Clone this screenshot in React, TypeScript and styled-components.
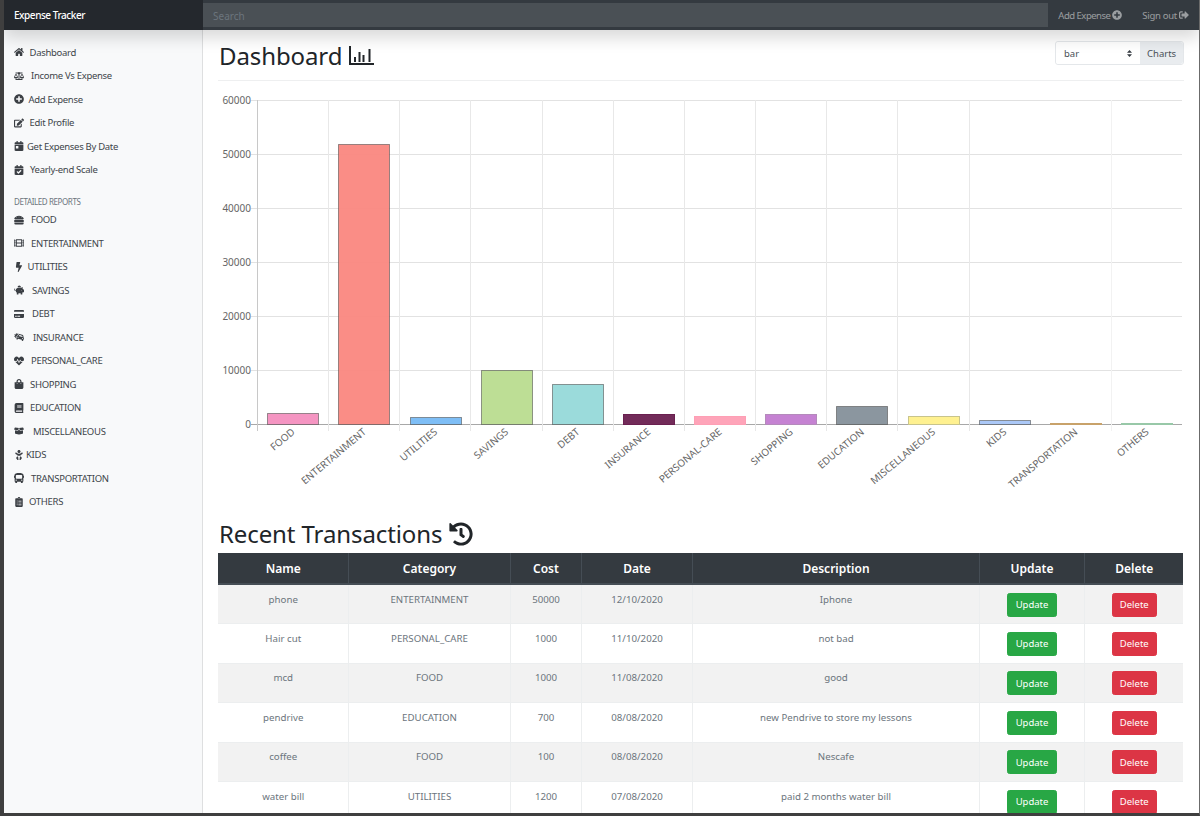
import React from 'react'
import styled, { createGlobalStyle } from 'styled-components'
import { IconType } from 'react-icons'
import {
  FaBalanceScale,
  FaBaby,
  FaBolt,
  FaBook,
  FaBoxOpen,
  FaBus,
  FaCalendarCheck,
  FaCalendarDay,
  FaCarCrash,
  FaClipboardList,
  FaCreditCard,
  FaEdit,
  FaFilm,
  FaHamburger,
  FaHeartbeat,
  FaHistory,
  FaHome,
  FaPiggyBank,
  FaPlusCircle,
  FaShoppingBag,
  FaSignOutAlt,
} from 'react-icons/fa'

const GlobalStyle = createGlobalStyle`
  html, body {
    margin: 0;
    padding: 0;
    overflow: hidden;
    background: #fff;
  }
  * {
    box-sizing: border-box;
  }
`

const font = `"Noto Sans", "Open Sans", "Liberation Sans", sans-serif`

interface NavEntry {
  label: string
  icon: IconType
  textLeft: number
}

const mainLinks: NavEntry[] = [
  { label: 'Dashboard', icon: FaHome, textLeft: 15.5 },
  { label: 'Income Vs Expense', icon: FaBalanceScale, textLeft: 17 },
  { label: 'Add Expense', icon: FaPlusCircle, textLeft: 14.5 },
  { label: 'Edit Profile', icon: FaEdit, textLeft: 15.5 },
  { label: 'Get Expenses By Date', icon: FaCalendarDay, textLeft: 13 },
  { label: 'Yearly-end Scale', icon: FaCalendarCheck, textLeft: 16 },
]

const reportLinks: NavEntry[] = [
  { label: 'FOOD', icon: FaHamburger, textLeft: 17 },
  { label: 'ENTERTAINMENT', icon: FaFilm, textLeft: 17 },
  { label: 'UTILITIES', icon: FaBolt, textLeft: 13.5 },
  { label: 'SAVINGS', icon: FaPiggyBank, textLeft: 18 },
  { label: 'DEBT', icon: FaCreditCard, textLeft: 18 },
  { label: 'INSURANCE', icon: FaCarCrash, textLeft: 19 },
  { label: 'PERSONAL_CARE', icon: FaHeartbeat, textLeft: 17 },
  { label: 'SHOPPING', icon: FaShoppingBag, textLeft: 16 },
  { label: 'EDUCATION', icon: FaBook, textLeft: 16 },
  { label: 'MISCELLANEOUS', icon: FaBoxOpen, textLeft: 19 },
  { label: 'KIDS', icon: FaBaby, textLeft: 12 },
  { label: 'TRANSPORTATION', icon: FaBus, textLeft: 17 },
  { label: 'OTHERS', icon: FaClipboardList, textLeft: 15 },
]

const edge = 'rgba(70, 70, 70, 0.55)'

const bars = [
  { label: 'FOOD', value: 2000, color: '#f48fbf', border: edge },
  { label: 'ENTERTAINMENT', value: 51800, color: '#fa8780', border: edge },
  { label: 'UTILITIES', value: 1300, color: '#77bbf5', border: edge },
  { label: 'SAVINGS', value: 10000, color: '#b9dc8f', border: edge },
  { label: 'DEBT', value: 7400, color: '#96d9d9', border: edge },
  { label: 'INSURANCE', value: 1900, color: '#6a2050', border: '#6a2050' },
  { label: 'PERSONAL-CARE', value: 1500, color: '#fe9fb5', border: '#fe9fb5' },
  { label: 'SHOPPING', value: 1900, color: '#c27bd0', border: '#b48abb' },
  { label: 'EDUCATION', value: 3400, color: '#85909a', border: edge },
  { label: 'MISCELLANEOUS', value: 1500, color: '#fff08a', border: '#c8c48c' },
  { label: 'KIDS', value: 750, color: '#a6c5f7', border: edge },
  { label: 'TRANSPORTATION', value: 250, color: '#c8a26a', border: '#c8a26a' },
  { label: 'OTHERS', value: 200, color: '#98c8a8', border: '#98c8a8' },
]

const transactions = [
  { name: 'phone', category: 'ENTERTAINMENT', cost: 50000, date: '12/10/2020', description: 'Iphone' },
  { name: 'Hair cut', category: 'PERSONAL_CARE', cost: 1000, date: '11/10/2020', description: 'not bad' },
  { name: 'mcd', category: 'FOOD', cost: 1000, date: '11/08/2020', description: 'good' },
  { name: 'pendrive', category: 'EDUCATION', cost: 700, date: '08/08/2020', description: 'new Pendrive to store my lessons' },
  { name: 'coffee', category: 'FOOD', cost: 100, date: '08/08/2020', description: 'Nescafe' },
  { name: 'water bill', category: 'UTILITIES', cost: 1200, date: '07/08/2020', description: 'paid 2 months water bill' },
]

const columns = [
  { title: 'Name', width: 130 },
  { title: 'Category', width: 162 },
  { title: 'Cost', width: 71 },
  { title: 'Date', width: 111 },
  { title: 'Description', width: 287 },
  { title: 'Update', width: 105 },
  { title: 'Delete', width: 99 },
]

const axisLeft = 257
const axisRight = 1182
const axisTop = 100
const axisBottom = 424.5
const slot = (axisRight - axisLeft) / 13
const yOf = (value: number) => axisBottom - (value / 60000) * (axisBottom - axisTop)

// the reference loses a few of the vertical grid lines
const gridColor = (i: number) => {
  if (i === 0) return '#c8c8c8'
  if (i === 11 || i === 13) return 'none'
  if (i === 12) return '#f2f2f2'
  return '#e8e8e8'
}

const BarChart = () => (
  <ChartSvg viewBox="219 90 965 427">
    {[0, 10000, 20000, 30000, 40000, 50000, 60000].map(tick => (
      <g key={tick}>
        <line
          x1={axisLeft - 6}
          x2={axisRight}
          y1={Math.floor(yOf(tick)) + 0.5}
          y2={Math.floor(yOf(tick)) + 0.5}
          stroke={tick === 0 ? '#a8a8a8' : '#e2e2e2'}
        />
        <AxisText x={axisLeft - 6} y={yOf(tick) + 3.5} textAnchor="end">
          {tick}
        </AxisText>
      </g>
    ))}
    {Array.from({ length: 14 }).map((_, i) => {
      const x = Math.round(axisLeft + slot * i) + 0.5
      return <line key={i} x1={x} x2={x} y1={axisTop} y2={431} stroke={gridColor(i)} />
    })}
    {bars.map((bar, i) => {
      const x = axisLeft + slot * i + 10.2
      const y = Math.floor(yOf(bar.value)) + 0.5
      const center = axisLeft + slot * (i + 0.5)
      return (
        <g key={bar.label}>
          <rect
            x={Math.round(x) + 0.5}
            y={y}
            width={51}
            height={Math.max(axisBottom - y, 0.5)}
            fill={bar.color}
            fillOpacity={0.95}
            stroke={bar.border}
          />
          <AxisText
            textAnchor="end"
            transform={`translate(${center + 3} 433) rotate(-40)`}
          >
            {bar.label}
          </AxisText>
        </g>
      )
    })}
  </ChartSvg>
)

const App = () => (
  <Frame>
    <GlobalStyle />
    <TopBar>
      <Brand>Expense Tracker</Brand>
      <SearchInput placeholder="Search" />
      <TopLink $spacing={-0.5}>
        Add Expense <FaPlusCircle />
      </TopLink>
      <TopLink $spacing={-0.3}>
        Sign out <FaSignOutAlt />
      </TopLink>
    </TopBar>
    <Body>
      <Sidebar>
        {mainLinks.map(link => (
          <NavItem key={link.label} $textLeft={link.textLeft}>
            <span>
              <link.icon />
            </span>
            {link.label}
          </NavItem>
        ))}
        <SideHeading>DETAILED REPORTS</SideHeading>
        {reportLinks.map(link => (
          <NavItem key={link.label} $textLeft={link.textLeft}>
            <span>
              <link.icon />
            </span>
            {link.label}
          </NavItem>
        ))}
      </Sidebar>
      <Main>
        <PageHeader>
          <Title>
            Dashboard
            <svg width="25" height="19" viewBox="0 0 25 19" fill="none">
              <path d="M1 0v18h24" stroke="#212529" strokeWidth="2" />
              <path
                d="M6 11v5M10.5 6v10M14.5 9v7M20.5 3v13"
                stroke="#212529"
                strokeWidth="2"
              />
            </svg>
          </Title>
          <ChartPicker>
            <PickerValue>
              bar
              <svg width="5" height="7" viewBox="0 0 5 7">
                <path d="M2.5 0 5 2.8H0zM2.5 7 0 4.2h5z" fill="#343a40" />
              </svg>
            </PickerValue>
            <PickerAddon>Charts</PickerAddon>
          </ChartPicker>
        </PageHeader>
        <BarChart />
        <SectionTitle>
          Recent Transactions <FaHistory />
        </SectionTitle>
        <Table>
          <colgroup>
            {columns.map(col => (
              <col key={col.title} width={col.width} />
            ))}
          </colgroup>
          <thead>
            <tr>
              {columns.map(col => (
                <HeadCell key={col.title}>{col.title}</HeadCell>
              ))}
            </tr>
          </thead>
          <tbody>
            {transactions.map(row => (
              <Row key={row.name}>
                <Cell>{row.name}</Cell>
                <Cell>{row.category}</Cell>
                <Cell>{row.cost}</Cell>
                <Cell>{row.date}</Cell>
                <Cell>{row.description}</Cell>
                <Cell>
                  <ActionButton $color="#28a745">Update</ActionButton>
                </Cell>
                <Cell>
                  <ActionButton $color="#dc3545">Delete</ActionButton>
                </Cell>
              </Row>
            ))}
          </tbody>
        </Table>
      </Main>
    </Body>
  </Frame>
)

export default App

const Frame = styled.div`
  display: flex;
  flex-direction: column;
  width: 1200px;
  height: 816px;
  overflow: hidden;
  border-left: 4px solid #3f3f3f;
  border-right: 1px solid #6b6b6b;
  border-bottom: 3px solid #3f3f3f;
  font-family: ${font};
`

const TopBar = styled.header`
  position: relative;
  z-index: 2;
  display: flex;
  align-items: center;
  flex: none;
  height: 30px;
  background: #343a40;
  box-shadow: 0 8px 16px rgba(0, 0, 0, 0.15);
`

const Brand = styled.div`
  display: flex;
  align-items: center;
  width: 199px;
  height: 100%;
  padding-left: 10px;
  background: #24282d;
  color: #fff;
  font-size: 10px;
  font-weight: 500;
  letter-spacing: -0.45px;
`

const SearchInput = styled.input`
  flex: 1;
  min-width: 0;
  height: 24px;
  padding: 2px 10px 0;
  border: 0;
  outline: 0;
  background: #4a5055;
  color: #fff;
  font-family: ${font};
  font-size: 10px;

  &::placeholder {
    color: #6c757d;
  }
`

const TopLink = styled.a<{ $spacing: number }>`
  display: flex;
  flex: none;
  align-items: center;
  padding: 0 10px;
  color: rgba(255, 255, 255, 0.5);
  font-size: 9.5px;
  letter-spacing: ${p => p.$spacing}px;
  white-space: pre;

  svg {
    font-size: 10px;
  }
`

const Body = styled.div`
  display: flex;
  flex: 1;
  min-height: 0;
`

const Sidebar = styled.nav`
  flex: none;
  width: 199px;
  padding: 10.4px 0 0 10px;
  background: #f8f9fa;
  box-shadow: inset -1px 0 0 rgba(0, 0, 0, 0.1);
`

const NavItem = styled.div<{ $textLeft: number }>`
  display: flex;
  align-items: center;
  height: 23.5px;
  color: #40454a;
  font-size: 9.5px;
  letter-spacing: -0.3px;

  span {
    display: flex;
    flex: none;
    width: ${p => p.$textLeft}px;
    color: #3b3f44;
    font-size: 10px;
  }
`

const SideHeading = styled.h6`
  margin: 0;
  height: 26.7px;
  padding-top: 14.5px;
  color: #6c757d;
  font-size: 8px;
  font-weight: 400;
  line-height: 11px;
  letter-spacing: -0.4px;
`

const Main = styled.main`
  flex: 1;
  min-width: 0;
  padding: 0 15px;
  overflow: hidden;
`

const PageHeader = styled.div`
  display: flex;
  align-items: flex-start;
  justify-content: space-between;
  height: 51px;
  border-bottom: 1px solid #eeeff0;
`

const Title = styled.h1`
  display: flex;
  align-items: center;
  gap: 7px;
  margin: 10.5px 0 0 1px;
  color: #212529;
  font-size: 24px;
  font-weight: 400;
  line-height: 29px;
  letter-spacing: -0.1px;
`

const ChartPicker = styled.div`
  display: flex;
  height: 24px;
  margin-top: 11px;
  border: 1px solid #e4e7ea;
  border-radius: 3px;
  font-size: 9.5px;
`

const PickerValue = styled.div`
  display: flex;
  align-items: center;
  justify-content: space-between;
  width: 84px;
  padding: 0 8px;
  color: #495057;
  background: #fff;
  border-radius: 3px 0 0 3px;
`

const PickerAddon = styled.div`
  display: flex;
  align-items: center;
  width: 43px;
  padding-left: 7px;
  color: #495057;
  background: #e9ecef;
  border-radius: 0 3px 3px 0;
`

const ChartSvg = styled.svg`
  display: block;
  width: 965px;
  height: 427px;
  margin: 9px 0 0 1px;
`

const AxisText = styled.text`
  fill: #666;
  font-family: ${font};
  font-size: 10px;
`

const SectionTitle = styled.h2`
  display: flex;
  align-items: center;
  gap: 7px;
  height: 36px;
  margin: 0 0 0 1px;
  padding-bottom: 2px;
  color: #212529;
  font-size: 24px;
  font-weight: 400;
  line-height: 30px;
  letter-spacing: -0.1px;

  svg {
    font-size: 24px;
  }
`

const Table = styled.table`
  width: 965px;
  table-layout: fixed;
  border-collapse: collapse;
  text-align: center;
`

const HeadCell = styled.th`
  height: 31px;
  padding: 0 0 0 1px;
  background: #343a40;
  border: 1px solid #454d55;
  border-width: 0 1px 2px;
  color: #fff;
  font-size: 12px;
  font-weight: 600;

  &:first-child {
    border-left: 0;
  }
  &:last-child {
    border-right: 0;
  }
`

const Row = styled.tr`
  height: 39.5px;

  &:nth-child(odd) {
    background: #f2f2f2;
  }
`

const Cell = styled.td`
  padding: 7.6px 4px 0 5px;
  border: 1px solid #eceeef;
  border-width: 1px 1px 0;
  color: #6c757d;
  font-size: 9.7px;
  line-height: 13px;
  vertical-align: top;

  &:first-child {
    border-left: 0;
  }
  &:last-child {
    border-right: 0;
  }
`

const ActionButton = styled.button<{ $color: string }>`
  display: block;
  height: 24px;
  margin: 0 auto;
  padding: 0 7.3px;
  border: 1px solid ${p => p.$color};
  border-radius: 2.5px;
  background: ${p => p.$color};
  color: #fff;
  font-family: ${font};
  font-size: 9.5px;
`
